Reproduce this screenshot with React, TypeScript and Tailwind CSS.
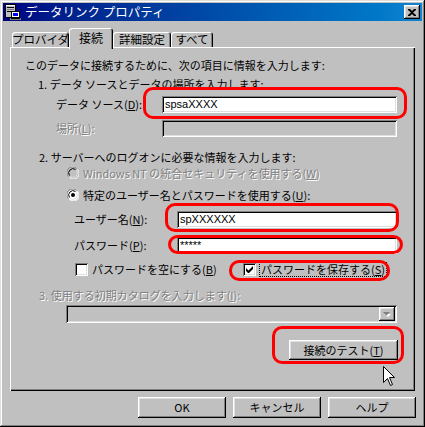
import React from "react";

const raised =
  "shadow-[inset_-1px_-1px_#000,inset_1px_1px_#fff,inset_-2px_-2px_#808080,inset_2px_2px_#dfdfdf]";
const sunken =
  "shadow-[inset_1px_1px_#808080,inset_-1px_-1px_#fff,inset_2px_2px_#000,inset_-2px_-2px_#dfdfdf]";
const dis = "text-[#808080] [text-shadow:1px_1px_0_#fff]";

function Tab({ label, w, selected }: { label: string; w: number; selected?: boolean }) {
  if (selected) {
    return (
      <div
        className="relative z-10 h-[21px] mb-[-2px] bg-[#c0c0c0] rounded-t-[3px] flex justify-center pt-[3px] text-[12px] leading-[14px] whitespace-nowrap shadow-[inset_1px_1px_#fff,inset_-1px_0_#000,inset_-2px_0_#808080]"
        style={{ width: w }}
      >
        {label}
      </div>
    );
  }
  return (
    <div
      className="h-[15px] bg-[#c0c0c0] rounded-t-[3px] flex justify-center pt-[1px] text-[11.5px] leading-[13px] whitespace-nowrap shadow-[inset_1px_1px_#fff,inset_-1px_0_#000,inset_-2px_0_#808080]"
      style={{ width: w }}
    >
      {label}
    </div>
  );
}

function Radio({ checked, disabled }: { checked?: boolean; disabled?: boolean }) {
  return (
    <div className="relative w-[12px] h-[12px] shrink-0">
      <svg width="12" height="12" viewBox="0 0 12 12" className="block">
        <circle cx="6" cy="6" r="5.5" fill={disabled ? "#c0c0c0" : "#fff"} />
        <path d="M1.5 9.5 A5.5 5.5 0 0 1 9.5 1.5" fill="none" stroke="#808080" strokeWidth="1" />
        <path d="M2.5 8.5 A4.3 4.3 0 0 1 8.5 2.5" fill="none" stroke="#000" strokeWidth="1" />
        <path d="M10.5 2.5 A5.5 5.5 0 0 1 2.5 10.5" fill="none" stroke="#fff" strokeWidth="1" />
        <path d="M9.5 3.5 A4.3 4.3 0 0 1 3.5 9.5" fill="none" stroke="#dfdfdf" strokeWidth="1" />
        {checked && <circle cx="6" cy="6" r="2" fill="#000" />}
      </svg>
    </div>
  );
}

function Check({ checked }: { checked?: boolean }) {
  return (
    <div className={`w-[13px] h-[13px] shrink-0 bg-white ${sunken} flex items-center justify-center`}>
      {checked && (
        <svg width="7" height="7" viewBox="0 0 7 7" className="block">
          <path d="M0 2v3l2 2h1l4-4V0L2.5 4.5Z" fill="#000" />
        </svg>
      )}
    </div>
  );
}

function Oval({ l, t, w, h }: { l: number; t: number; w: number; h: number }) {
  return (
    <div
      className="absolute border-[3px] border-[#ff0000] rounded-[10px] pointer-events-none z-20"
      style={{ left: l, top: t, width: w, height: h }}
    />
  );
}

export default function App() {
  return (
    <div
      className={`relative w-[425px] h-[427px] bg-[#c0c0c0] p-[3px] flex flex-col text-black text-[11px] leading-[13px] font-['Noto_Sans_CJK_JP','Liberation_Sans',sans-serif] shadow-[inset_-1px_-1px_#000,inset_1px_1px_#dfdfdf,inset_-2px_-2px_#808080,inset_2px_2px_#fff]`}
    >
      {/* Title bar */}
      <div className="h-[18px] flex items-center bg-gradient-to-r from-[#000080] to-[#1084d0] pl-[2px] pr-[2px]">
        <svg width="16" height="16" viewBox="0 0 16 16" className="block shrink-0">
          <rect x="0.5" y="0.5" width="10" height="13" fill="#c0c0c0" stroke="#000" />
          <rect x="1" y="1" width="9" height="1" fill="#fff" />
          <rect x="2" y="3" width="7" height="1" fill="#000" />
          <rect x="2" y="5" width="7" height="1" fill="#808080" />
          <rect x="2" y="7" width="4" height="1" fill="#000" />
          <rect x="6.5" y="7.5" width="8" height="6" fill="#fff" stroke="#000" />
          <rect x="8" y="9" width="5" height="3" fill="#0000ff" />
          <rect x="5" y="14" width="11" height="2" fill="#808080" />
          <rect x="6" y="14" width="9" height="1" fill="#000" />
        </svg>
        <span className="ml-[4px] text-white text-[12.5px] leading-[14px] whitespace-nowrap">データリンク プロパティ</span>
        <div className={`ml-auto w-[16px] h-[14px] bg-[#c0c0c0] ${raised} flex items-center justify-center`}>
          <svg width="8" height="7" viewBox="0 0 8 7" className="block">
            <path d="M0 0h2l2 2l2-2h2v1L5 3.5L8 6v1H6L4 5L2 7H0V6l3-2.5L0 1Z" fill="#000" />
          </svg>
        </div>
      </div>

      {/* Tabs */}
      <div className="mt-[7px] ml-[9px] h-[19px] flex items-end">
        <Tab label="プロバイダ" w={57} />
        <Tab label="接続" w={44} selected />
        <Tab label="詳細設定" w={58} />
        <Tab label="すべて" w={42} />
      </div>

      {/* Panel */}
      <div className="ml-[7px] w-[405px] h-[344px] pt-[11px] flex flex-col items-start whitespace-nowrap shadow-[inset_1px_1px_#fff,inset_-1px_-1px_#000,inset_-2px_-2px_#808080]">
        <div className="ml-[15px] h-[14px] flex items-center">このデータに接続するために、次の項目に情報を入力します:</div>
        <div className="mt-[5px] ml-[28px] h-[14px] flex items-center">1. データ ソースとデータの場所を入力します:</div>

        <div className="mt-[5px] ml-[46px] h-[17px] flex items-center">
          <span className="w-[106px]">
            データ ソース(<u>D</u>):
          </span>
          <div className={`w-[235px] h-[17px] bg-white ${sunken} flex items-center pl-[3px] font-['Liberation_Sans',sans-serif] text-[11px]`}>
            spsaXXXX
          </div>
        </div>

        <div className="mt-[7px] ml-[46px] h-[17px] flex items-center">
          <span className={`w-[106px] ${dis}`}>
            場所(<u>L</u>):
          </span>
          <div className={`w-[235px] h-[17px] bg-[#c0c0c0] ${sunken}`} />
        </div>

        <div className="mt-[13px] ml-[29px] h-[14px] flex items-center">2. サーバーへのログオンに必要な情報を入力します:</div>

        <div className="mt-[2px] ml-[57px] h-[14px] flex items-center gap-[4px]">
          <Radio disabled />
          <span className={dis}>
            Windows NT の統合セキュリティを使用する(<u>W</u>)
          </span>
        </div>

        <div className="mt-[8px] ml-[57px] h-[14px] flex items-center gap-[4px]">
          <Radio checked />
          <span>
            特定のユーザー名とパスワードを使用する(<u>U</u>):
          </span>
        </div>

        <div className="mt-[9px] ml-[64px] h-[17px] flex items-center">
          <span className="w-[103px]">
            ユーザー名(<u>N</u>):
          </span>
          <div className={`w-[220px] h-[17px] bg-white ${sunken} flex items-center pl-[3px] font-['Liberation_Sans',sans-serif] text-[11px]`}>
            spXXXXXX
          </div>
        </div>

        <div className="mt-[9px] ml-[64px] h-[17px] flex items-center">
          <span className="w-[103px]">
            パスワード(<u>P</u>):
          </span>
          <div className={`w-[220px] h-[17px] bg-white ${sunken} flex items-center pl-[3px] font-['Liberation_Sans',sans-serif] text-[11px]`}>
            *****
          </div>
        </div>

        <div className="mt-[8px] ml-[65px] h-[14px] flex items-center">
          <div className="w-[168px] flex items-center gap-[4px]">
            <Check />
            <span>
              パスワードを空にする(<u>B</u>)
            </span>
          </div>
          <div className="flex items-center gap-[3px]">
            <Check checked />
            <span className="border border-dotted border-black px-[1px] h-[15px] flex items-center">
              パスワードを保存する(<u>S</u>)
            </span>
          </div>
        </div>

        <div className={`mt-[12px] ml-[29px] h-[14px] flex items-center ${dis}`}>
          3. 使用する初期カタログを入力します(<u>I</u>):
        </div>

        <div className={`mt-[3px] ml-[56px] w-[331px] h-[18px] bg-[#c0c0c0] ${sunken} flex items-center justify-end pr-[2px]`}>
          <div className={`w-[16px] h-[14px] bg-[#c0c0c0] ${raised} flex items-center justify-center`}>
            <svg width="8" height="5" viewBox="0 0 8 5" className="block">
              <path d="M1 1h6l-3 3Z" fill="#fff" transform="translate(1,1)" />
              <path d="M0 0h7l-3.5 3.5Z" fill="#808080" />
            </svg>
          </div>
        </div>

        <div className={`mt-[17px] ml-[279px] w-[109px] h-[20px] bg-[#c0c0c0] ${raised} flex items-center justify-center`}>
          接続のテスト(<u>T</u>)
        </div>
      </div>

      {/* Buttons */}
      <div className="mt-[6px] pr-[6px] flex justify-end gap-[7px]">
        {["OK", "キャンセル", "ヘルプ"].map((b) => (
          <div key={b} className={`w-[88px] h-[21px] bg-[#c0c0c0] ${raised} flex items-center justify-center`}>
            {b}
          </div>
        ))}
      </div>

      {/* Annotations */}
      <Oval l={143} t={87} w={264} h={32} />
      <Oval l={165} t={203} w={234} h={29} />
      <Oval l={168} t={235} w={235} h={19} />
      <Oval l={229} t={260} w={161} h={21} />
      <Oval l={272} t={326} w={132} h={38} />

      {/* Cursor */}
      <svg width="13" height="21" viewBox="0 0 13 21" className="absolute left-[383px] top-[366px] z-30">
        <path d="M0.5 0.5V16.5L4.5 12.5L7.5 19.5L9.5 18.5L6.5 11.5H11.5Z" fill="#fff" stroke="#000" strokeWidth="1" />
      </svg>
    </div>
  );
}
